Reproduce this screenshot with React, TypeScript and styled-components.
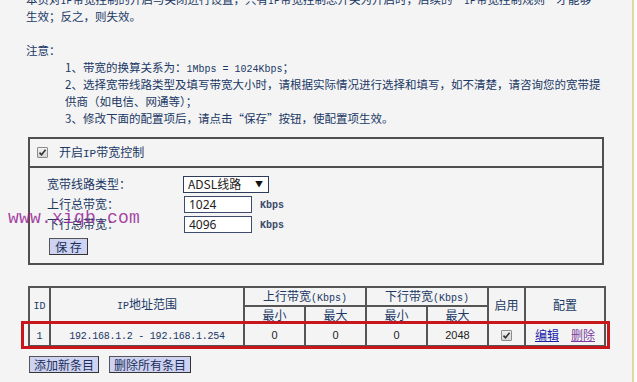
import React from "react";
import styled, { createGlobalStyle } from "styled-components";

const GlobalStyle = createGlobalStyle`
  html, body { margin: 0; padding: 0; background: #f4f4f4; }
  body { width: 637px; height: 382px; overflow: hidden; }
`;

const Frame = styled.div`
  display: flex;
  width: 637px;
  height: 382px;
  overflow: hidden;
  background: #f4f4f4;
  font-family: "Noto Sans CJK SC", sans-serif;
  font-size: 11.5px;
  color: #203864;
`;

const Main = styled.div`
  position: relative;
  flex: 0 0 632px;
  box-sizing: border-box;
  padding-left: 26px;
`;

const Edge = styled.div`
  flex: 0 0 2px;
  background: #e4d6a0;
`;

const Outside = styled.div`
  flex: 1;
  background: #fbfbfb;
`;

const Para = styled.div<{ $top?: number; $indent?: number }>`
  margin-top: ${(p) => p.$top ?? 0}px;
  padding-left: ${(p) => p.$indent ?? 0}px;
  line-height: 17px;
  white-space: nowrap;
`;

const Mono = styled.span<{ $size?: number; $ls?: number }>`
  font-family: "Liberation Mono", monospace;
  font-size: ${(p) => p.$size ?? 10}px;
  letter-spacing: ${(p) => p.$ls ?? 0}px;
  line-height: 1;
`;

const Panel = styled.div`
  margin: 10px 0 0 2px;
  width: 576px;
  box-sizing: border-box;
  border: 2px solid #4f4f4f;
`;

const PanelHead = styled.div`
  display: flex;
  align-items: center;
  gap: 11px;
  height: 27px;
  padding-left: 7px;
  border-bottom: 2px solid #4f4f4f;
  font-size: 12px;
  line-height: 14px;
`;

const PanelBody = styled.div`
  padding: 6px 0 8px 17px;
`;

const FormRow = styled.div`
  display: grid;
  grid-template-columns: 136px 77px auto;
  align-items: center;
  height: 20px;
`;

const Label = styled.span`
  font-size: 12px;
  line-height: 14px;
`;

const SelectBox = styled.div`
  display: flex;
  align-items: center;
  justify-content: space-between;
  width: 86px;
  height: 17px;
  box-sizing: border-box;
  padding: 0 5px 0 4px;
  border: 1px solid #2e3c5c;
  background: #fff;
  color: #222;
  font-size: 12px;
  line-height: 14px;
`;

const Arrow = styled.span`
  font-size: 8px;
  color: #111;
`;

const TextInput = styled.input`
  width: 68px;
  height: 17px;
  margin: 0 0 0 1px;
  box-sizing: border-box;
  padding: 0 4px;
  border: 1px solid #3c4b6e;
  background: #fff;
  color: #222;
  font-family: "Noto Sans", sans-serif;
  font-size: 12px;
  outline: none;
`;

const Unit = styled(Mono)`
  margin-top: 3px;
  font-weight: bold;
  color: #3a4a6a;
`;

const Button = styled.button<{ $w?: number }>`
  display: inline-flex;
  align-items: center;
  justify-content: center;
  height: 17px;
  width: ${(p) => (p.$w ? `${p.$w}px` : "auto")};
  box-sizing: border-box;
  padding: 0 4px;
  border: 1px solid #555;
  border-right-color: #333;
  border-bottom-color: #333;
  background: #cdd3f1;
  color: #1c2e5a;
  font-family: "Noto Sans CJK SC", sans-serif;
  font-size: 12px;
  line-height: 14px;
  cursor: pointer;
`;

const SaveRow = styled.div`
  display: flex;
  margin: 4px 0 0 2px;
`;

const Watermark = styled.div`
  position: absolute;
  left: 8px;
  top: 209px;
  font-family: "Liberation Mono", monospace;
  font-size: 18px;
  line-height: 18px;
  color: rgba(150, 36, 150, 0.85);
  letter-spacing: 0.2px;
  pointer-events: none;
`;

const TableWrap = styled.div`
  position: relative;
  margin: 21px 0 0 2px;
  width: 576px;
`;

const Table = styled.table`
  width: 576px;
  border-collapse: collapse;
  table-layout: fixed;
  font-size: 12px;
  line-height: 12px;
  th,
  td {
    border: 2px solid #555;
    padding: 0;
    text-align: center;
    vertical-align: middle;
    font-weight: normal;
    white-space: nowrap;
    line-height: 12px;
  }
`;

const Row = styled.tr<{ $h: number }>`
  height: ${(p) => p.$h}px;
`;

const Num = styled.span`
  font-family: "Liberation Sans", sans-serif;
  font-size: 11px;
  color: #222;
`;

const Highlight = styled.div`
  position: absolute;
  left: -7px;
  top: 35px;
  width: 589px;
  height: 28px;
  box-sizing: border-box;
  border: 3px solid #c8161d;
  pointer-events: none;
`;

const Link = styled.a<{ $visited?: boolean }>`
  color: ${(p) => (p.$visited ? "#7a3d9e" : "#1a22a8")};
  text-decoration: underline;
  font-size: 12px;
  margin: 0 6px;
`;

const Actions = styled.div`
  display: flex;
  gap: 10px;
  margin: 9px 0 0 3px;
`;

const Box = styled.span`
  display: inline-flex;
  align-items: center;
  justify-content: center;
  width: 11px;
  height: 11px;
  box-sizing: border-box;
  border: 1px solid #8c8c8c;
  border-radius: 1px;
  background: linear-gradient(#f2f2f2, #d6d6d6);
  vertical-align: middle;
`;

const Check = () => (
  <Box>
    <svg width="9" height="9" viewBox="0 0 9 9">
      <path d="M1.5 4.6 L3.5 6.8 L7.6 1.8" fill="none" stroke="#333" strokeWidth="1.6" />
    </svg>
  </Box>
);

export default function App() {
  return (
    <>
      <GlobalStyle />
      <Frame>
        <Main>
          <Para $top={-9}>
            本页对<Mono>IP</Mono>带宽控制的开启与关闭进行设置，只有<Mono>IP</Mono>带宽控制总开关为开启时，后续的“<Mono>IP</Mono>带宽控制规则”才能够
            <br />
            生效；反之，则失效。
          </Para>
          <Para $top={17}>注意：</Para>
          <Para $indent={39}>
            1、带宽的换算关系为：<Mono>1Mbps = 1024Kbps</Mono>；
            <br />
            2、选择宽带线路类型及填写带宽大小时，请根据实际情况进行选择和填写，如不清楚，请咨询您的宽带提
            <br />
            供商（如电信、网通等）；
            <br />
            3、修改下面的配置项后，请点击“保存”按钮，使配置项生效。
          </Para>

          <Panel>
            <PanelHead>
              <Check />
              <span>
                开启<Mono $size={11}>IP</Mono>带宽控制
              </span>
            </PanelHead>
            <PanelBody>
              <FormRow>
                <Label>宽带线路类型：</Label>
                <SelectBox>
                  <span>ADSL线路</span>
                  <Arrow>▼</Arrow>
                </SelectBox>
              </FormRow>
              <FormRow>
                <Label>上行总带宽：</Label>
                <TextInput defaultValue="1024" />
                <Unit>Kbps</Unit>
              </FormRow>
              <FormRow>
                <Label>下行总带宽：</Label>
                <TextInput defaultValue="4096" />
                <Unit>Kbps</Unit>
              </FormRow>
              <SaveRow>
                <Button $w={39}>保 存</Button>
              </SaveRow>
            </PanelBody>
          </Panel>

          <Watermark>www.xiqb.com</Watermark>

          <TableWrap>
            <Table>
              <colgroup>
                <col style={{ width: 21 }} />
                <col style={{ width: 194 }} />
                <col style={{ width: 61 }} />
                <col style={{ width: 61 }} />
                <col style={{ width: 61 }} />
                <col style={{ width: 61 }} />
                <col style={{ width: 37 }} />
                <col style={{ width: 80 }} />
              </colgroup>
              <thead>
                <Row $h={19}>
                  <th rowSpan={2}>
                    <Mono>ID</Mono>
                  </th>
                  <th rowSpan={2}>
                    <Mono>IP</Mono>地址范围
                  </th>
                  <th colSpan={2}>
                    上行带宽<Mono>(Kbps)</Mono>
                  </th>
                  <th colSpan={2}>
                    下行带宽<Mono>(Kbps)</Mono>
                  </th>
                  <th rowSpan={2}>启用</th>
                  <th rowSpan={2}>配置</th>
                </Row>
                <Row $h={17}>
                  <th>最小</th>
                  <th>最大</th>
                  <th>最小</th>
                  <th>最大</th>
                </Row>
              </thead>
              <tbody>
                <Row $h={23}>
                  <td>
                    <Mono>1</Mono>
                  </td>
                  <td>
                    <Mono $size={10} $ls={-0.25}>
                      192.168.1.2 - 192.168.1.254
                    </Mono>
                  </td>
                  <td>
                    <Num>0</Num>
                  </td>
                  <td>
                    <Num>0</Num>
                  </td>
                  <td>
                    <Num>0</Num>
                  </td>
                  <td>
                    <Num>2048</Num>
                  </td>
                  <td>
                    <Check />
                  </td>
                  <td>
                    <Link href="#">编辑</Link>
                    <Link href="#" $visited>
                      删除
                    </Link>
                  </td>
                </Row>
              </tbody>
            </Table>
            <Highlight />
          </TableWrap>

          <Actions>
            <Button>添加新条目</Button>
            <Button>删除所有条目</Button>
          </Actions>
        </Main>
        <Edge />
        <Outside />
      </Frame>
    </>
  );
}
